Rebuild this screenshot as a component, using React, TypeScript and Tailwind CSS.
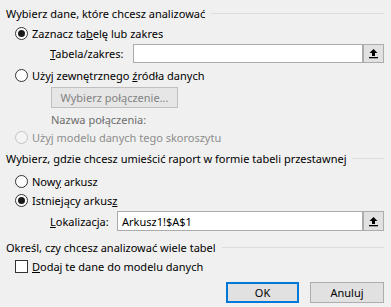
import React from "react";

function Radio({ checked = false, disabled = false }: { checked?: boolean; disabled?: boolean }) {
  return (
    <span
      className={`w-[13px] h-[13px] rounded-full border flex items-center justify-center shrink-0 ${
        disabled ? "border-[#c4c4c4] bg-[#f4f4f4]" : "border-[#333333] bg-white"
      }`}
    >
      {checked && <span className="w-[7px] h-[7px] rounded-full bg-[#1a1a1a]" />}
    </span>
  );
}

function PickButton() {
  return (
    <div className="w-[21px] h-full border border-[#adadad] bg-[#e1e1e1] flex items-center justify-center">
      <svg width="11" height="11" viewBox="0 0 11 11">
        <path d="M5.5 1 L9.5 5 L7 5 L7 8 L4 8 L4 5 L1.5 5 Z" fill="#000" />
        <rect x="1" y="9" width="9" height="1.3" fill="#000" />
      </svg>
    </div>
  );
}

function Header({ text }: { text: string }) {
  return (
    <div className="flex items-center h-[18px] pl-[6px]">
      <span>{text}</span>
      <div className="flex-1 ml-[6px] h-px bg-[#dcdcdc]" />
    </div>
  );
}

export default function App() {
  return (
    <div
      className="w-[391px] h-[307px] bg-[#f0f0f0] text-[11px] text-black pt-[4px] pr-[7px] overflow-hidden leading-none"
      style={{ fontFamily: '"Segoe UI", "Noto Sans", "Open Sans", sans-serif' }}
    >
      <Header text="Wybierz dane, które chcesz analizować" />

      <div className="mt-[2px] h-[18px] flex items-center gap-[4px] pl-[15px]">
        <Radio checked />
        <span>
          Zaznacz ta<span className="underline">b</span>elę lub zakres
        </span>
      </div>

      <div className="mt-[2px] h-[19px] flex items-center pl-[50px]">
        <span className="w-[83px]">
          <span className="underline">T</span>abela/zakres:
        </span>
        <div className="flex-1 h-full border border-[#ababab] bg-white" />
        <PickButton />
      </div>

      <div className="mt-[3px] h-[18px] flex items-center gap-[4px] pl-[15px]">
        <Radio />
        <span>
          Użyj zewnętrznego <span className="underline">ź</span>ródła danych
        </span>
      </div>

      <div className="mt-[3px] h-[21px] pl-[51px] flex">
        <div className="w-[127px] h-full border border-[#bfbfbf] bg-[#e6e6e6] text-[#838383] flex items-center justify-center">
          Wybierz połączenie...
        </div>
      </div>

      <div className="mt-[2px] h-[18px] flex items-center pl-[51px] text-[#6d6d6d]">Nazwa połączenia:</div>

      <div className="h-[18px] flex items-center gap-[4px] pl-[15px] text-[#8d8d8d]">
        <Radio disabled />
        <span>Użyj modelu danych tego skoroszytu</span>
      </div>

      <div className="mt-[3px]">
        <Header text="Wybierz, gdzie chcesz umieścić raport w formie tabeli przestawnej" />
      </div>

      <div className="mt-[5px] h-[18px] flex items-center gap-[4px] pl-[15px]">
        <Radio />
        <span>
          Now<span className="underline">y</span> arkusz
        </span>
      </div>

      <div className="mt-[1px] h-[18px] flex items-center gap-[4px] pl-[15px]">
        <Radio checked />
        <span>
          Istniejący arkus<span className="underline">z</span>
        </span>
      </div>

      <div className="mt-[2px] h-[20px] flex items-center pl-[50px]">
        <span className="w-[67px]">
          <span className="underline">L</span>okalizacja:
        </span>
        <div className="flex-1 h-full border border-[#ababab] bg-white flex items-center pl-[4px]">
          Arkusz1!$A$1
        </div>
        <PickButton />
      </div>

      <div className="mt-[7px]">
        <Header text="Określ, czy chcesz analizować wiele tabel" />
      </div>

      <div className="mt-[1px] h-[18px] flex items-center gap-[4px] pl-[15px]">
        <span className="w-[13px] h-[13px] border border-[#333333] bg-white shrink-0" />
        <span>
          <span className="underline">D</span>odaj te dane do modelu danych
        </span>
      </div>

      <div className="mt-[7px] h-[21px] flex justify-end gap-[11px]">
        <button className="w-[73px] h-full border-2 border-[#0078d7] bg-[#e1e1e1] flex items-center justify-center">
          OK
        </button>
        <button className="w-[74px] h-full border border-[#adadad] bg-[#e1e1e1] flex items-center justify-center">
          Anuluj
        </button>
      </div>
    </div>
  );
}
